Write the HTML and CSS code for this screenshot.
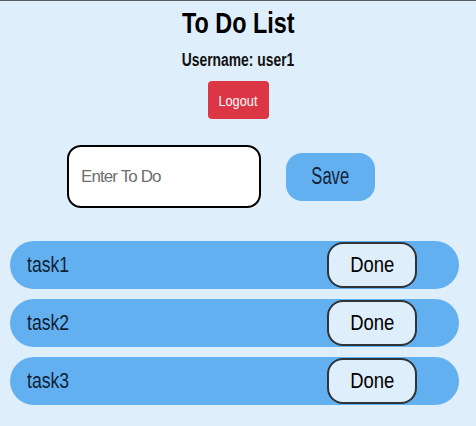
FILE: index.html
```html
<!DOCTYPE html>
<html>
<head>
<meta charset="utf-8">
<link rel="stylesheet" href="styles.css">
</head>
<body>
<div class="app">
  <header class="head">
    <h1 class="title"><span class="sx sx-title">To Do List</span></h1>
    <div class="user"><span class="sx sx-user">Username: user1</span></div>
    <button class="logout"><span class="sx sx-logout">Logout</span></button>
  </header>
  <form class="entry">
    <div class="input-wrap">
      <input class="todo-input" type="text" placeholder="Enter To Do">
    </div>
    <button type="button" class="save"><span class="sx sx-save">Save</span></button>
  </form>
  <ul class="tasks">
    <li class="task"><span class="sx sx-task task-name">task1</span><button class="done"><span class="sx sx-done">Done</span></button></li>
    <li class="task"><span class="sx sx-task task-name">task2</span><button class="done"><span class="sx sx-done">Done</span></button></li>
    <li class="task"><span class="sx sx-task task-name">task3</span><button class="done"><span class="sx sx-done">Done</span></button></li>
  </ul>
</div>
</body>
</html>
```
FILE: styles.css
```css
html, body {
  margin: 0;
  padding: 0;
  height: 100%;
}
body {
  background: #deeefb;
  border-top: 1px solid #555c64;
  box-sizing: border-box;
  font-family: "Liberation Sans", Arial, sans-serif;
  color: #000;
}
.sx {
  display: inline-block;
  transform-origin: center center;
}
.sx-title { transform: scaleX(0.78); }
.sx-user { transform: scaleX(0.77); }
.sx-logout { transform: scaleX(0.85); }
.sx-save { transform: scaleX(0.72); }
.sx-task { transform: scaleX(0.8); transform-origin: left center; }
.sx-done { transform: scaleX(0.84); }
.app {
  display: flex;
  flex-direction: column;
}
.head {
  display: flex;
  flex-direction: column;
  align-items: center;
}
.title {
  margin: 4px 0 0;
  font-size: 30px;
  line-height: 36px;
  font-weight: bold;
  white-space: nowrap;
}
.user {
  margin-top: 8px;
  font-size: 18px;
  line-height: 22px;
  font-weight: bold;
  color: #111;
  white-space: nowrap;
}
.logout {
  margin-top: 10px;
  width: 61px;
  height: 38px;
  border: none;
  border-radius: 4px;
  background: #dc3545;
  color: #fff;
  font-family: inherit;
  font-size: 15px;
  padding: 0;
}
.entry {
  display: flex;
  align-items: center;
  margin: 26px 0 0;
  padding-left: 67px;
  gap: 25px;
}
.input-wrap {
  display: flex;
}
.todo-input {
  box-sizing: border-box;
  width: 194px;
  height: 63px;
  border: 2px solid #000;
  border-radius: 14px;
  background: #fff;
  padding: 0 12px;
  font-family: inherit;
  font-size: 17px;
  outline: none;
  letter-spacing: -0.9px;
}
.todo-input::placeholder {
  color: #6f6f6f;
}
.save {
  width: 89px;
  height: 48px;
  border: none;
  border-radius: 16px;
  background: #63b0f0;
  color: #132238;
  font-family: inherit;
  font-size: 23px;
  padding: 0;
}
.tasks {
  list-style: none;
  margin: 33px 17px 0 10px;
  padding: 0;
  display: flex;
  flex-direction: column;
  gap: 10px;
}
.task {
  height: 48px;
  border-radius: 24px;
  background: #63b0f0;
  display: flex;
  align-items: center;
  justify-content: space-between;
  padding: 0 42px 0 17px;
}
.task-name {
  font-size: 22px;
  color: #0f1f33;
}
.done {
  box-sizing: border-box;
  width: 90px;
  height: 46px;
  border: 2px solid #2e3338;
  border-radius: 16px;
  background: #deeefb;
  color: #000;
  font-family: inherit;
  font-size: 22px;
  padding: 0;
}
```
